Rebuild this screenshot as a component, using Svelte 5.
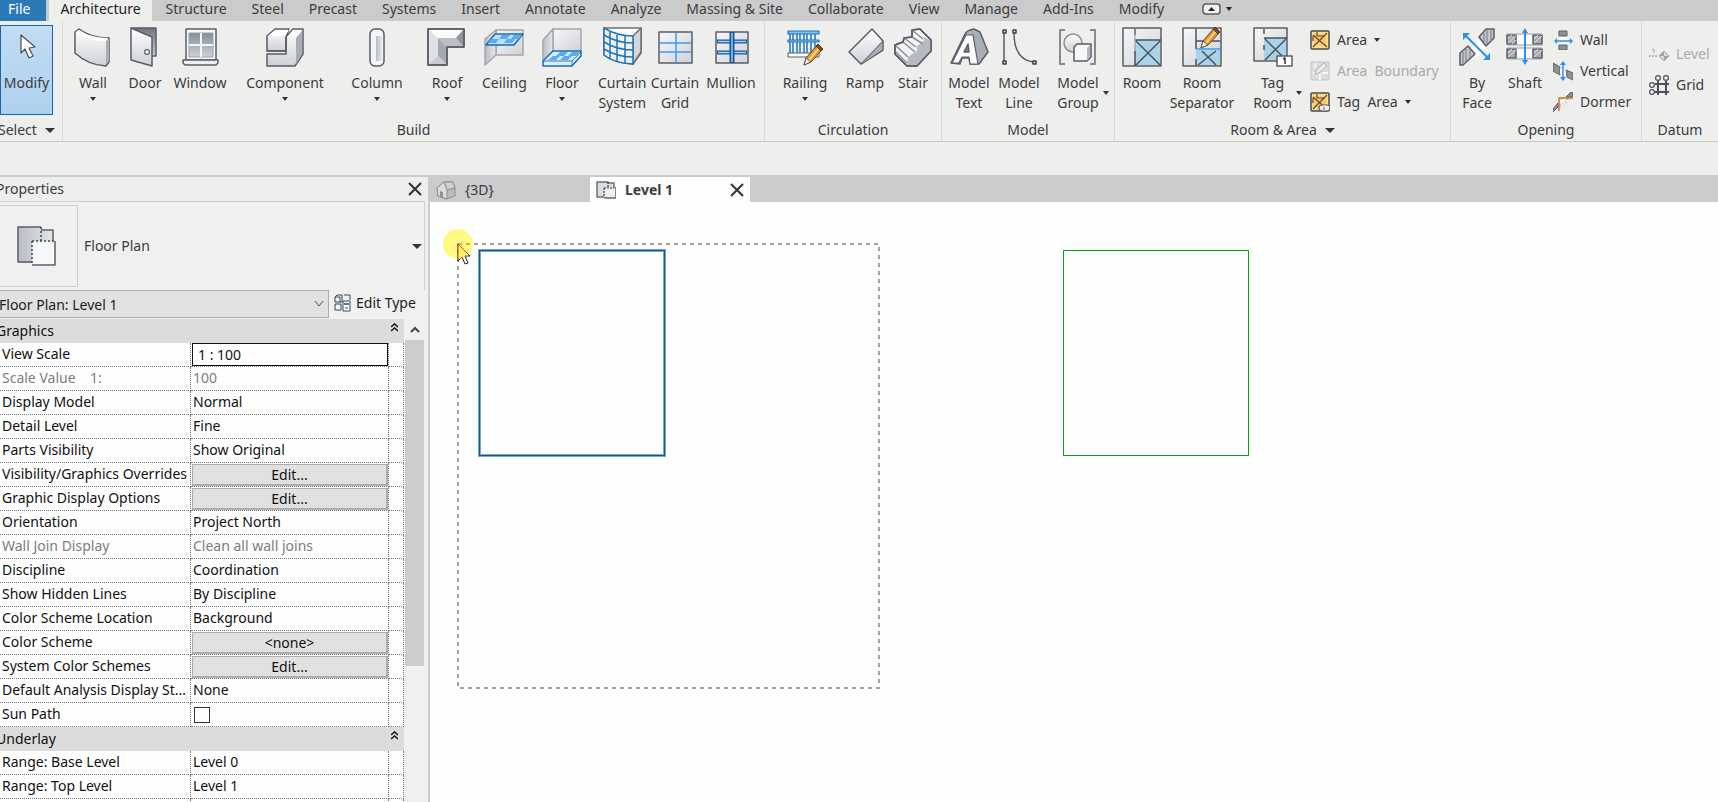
<script>
	const menus = [
		'Architecture', 'Structure', 'Steel', 'Precast', 'Systems', 'Insert', 'Annotate', 'Analyze',
		'Massing & Site', 'Collaborate', 'View', 'Manage', 'Add-Ins', 'Modify'
	];

	const panels = [
		{
			id: 'build',
			title: 'Build',
			tools: [
				{ icon: 'wall', lines: ['Wall'], caret: 'below' },
				{ icon: 'door', lines: ['Door'] },
				{ icon: 'window', lines: ['Window'] },
				{ icon: 'component', lines: ['Component'], caret: 'below' },
				{ icon: 'column', lines: ['Column'], caret: 'below' },
				{ icon: 'roof', lines: ['Roof'], caret: 'below' },
				{ icon: 'ceiling', lines: ['Ceiling'] },
				{ icon: 'floor', lines: ['Floor'], caret: 'below' },
				{ icon: 'curtain-system', lines: ['Curtain', 'System'] },
				{ icon: 'curtain-grid', lines: ['Curtain', 'Grid'] },
				{ icon: 'mullion', lines: ['Mullion'] }
			]
		},
		{
			id: 'circulation',
			title: 'Circulation',
			tools: [
				{ icon: 'railing', lines: ['Railing'], caret: 'below' },
				{ icon: 'ramp', lines: ['Ramp'] },
				{ icon: 'stair', lines: ['Stair'] }
			]
		},
		{
			id: 'model',
			title: 'Model',
			tools: [
				{ icon: 'model-text', lines: ['Model', 'Text'] },
				{ icon: 'model-line', lines: ['Model', 'Line'] },
				{ icon: 'model-group', lines: ['Model', 'Group'], caret: 'side' }
			]
		},
		{
			id: 'room',
			title: 'Room & Area',
			more: true,
			tools: [
				{ icon: 'room', lines: ['Room'] },
				{ icon: 'room-separator', lines: ['Room', 'Separator'] },
				{ icon: 'tag-room', lines: ['Tag', 'Room'], caret: 'side' }
			],
			small: [
				{ icon: 'area', label: 'Area', caret: true },
				{ icon: 'area-boundary', label: 'Area  Boundary', disabled: true },
				{ icon: 'tag-area', label: 'Tag  Area', caret: true }
			]
		},
		{
			id: 'opening',
			title: 'Opening',
			tools: [
				{ icon: 'by-face', lines: ['By', 'Face'] },
				{ icon: 'shaft', lines: ['Shaft'] }
			],
			small: [
				{ icon: 'wall-opening', label: 'Wall' },
				{ icon: 'vertical', label: 'Vertical' },
				{ icon: 'dormer', label: 'Dormer' }
			]
		},
		{
			id: 'datum',
			title: 'Datum',
			tools: [],
			small: [
				{ icon: 'level', label: 'Level', disabled: true },
				{ icon: 'grid', label: 'Grid' }
			]
		}
	];

	const groups = [
		{
			title: 'Graphics',
			rows: [
				{ name: 'View Scale', value: '1 : 100', kind: 'input' },
				{ name: 'Scale Value    1:', value: '100', disabled: true },
				{ name: 'Display Model', value: 'Normal' },
				{ name: 'Detail Level', value: 'Fine' },
				{ name: 'Parts Visibility', value: 'Show Original' },
				{ name: 'Visibility/Graphics Overrides', value: 'Edit...', kind: 'button' },
				{ name: 'Graphic Display Options', value: 'Edit...', kind: 'button' },
				{ name: 'Orientation', value: 'Project North' },
				{ name: 'Wall Join Display', value: 'Clean all wall joins', disabled: true },
				{ name: 'Discipline', value: 'Coordination' },
				{ name: 'Show Hidden Lines', value: 'By Discipline' },
				{ name: 'Color Scheme Location', value: 'Background' },
				{ name: 'Color Scheme', value: '<none>', kind: 'button' },
				{ name: 'System Color Schemes', value: 'Edit...', kind: 'button' },
				{ name: 'Default Analysis Display St...', value: 'None' },
				{ name: 'Sun Path', kind: 'check' }
			]
		},
		{
			title: 'Underlay',
			rows: [
				{ name: 'Range: Base Level', value: 'Level 0' },
				{ name: 'Range: Top Level', value: 'Level 1' },
				{ name: '', value: '' }
			]
		}
	];

	let activeMenu = $state('Architecture');
	let collapsed = $state({});
</script>

{#snippet caret(big)}
	{#if big}
		<svg class="caret" width="10" height="5"><path d="M0 0h10L5 5z" /></svg>
	{:else}
		<svg class="caret" width="6" height="4"><path d="M0 0h6L3 4z" /></svg>
	{/if}
{/snippet}

{#snippet pencil()}
	<path d="M19 38l2-7 12-14 5 5-12 13z" fill="#e8922a" stroke="#5a4a3a" stroke-width="1" />
	<path d="M24 33l10-12" stroke="#ffd27a" stroke-width="2" />
	<path d="M19 38l2-7 5 4z" fill="#f6efe2" stroke="#55585e" stroke-width="1" />
	<path d="M31 19l2-2 5 5-2 2z" fill="#8a4a1c" stroke="#4a3a30" stroke-width="1" />
{/snippet}

{#snippet bigIcon(name)}
	<svg class="icon" width="40" height="40" viewBox="0 0 40 40" fill="none" stroke="#595e66" stroke-width="1.5" stroke-linejoin="round">
		{#if name === 'modify'}
			<path d="M14 8v18l4-4 4 9 4-2-4-8 6-1z" fill="#fff" stroke="#4a5058" stroke-width="1.2" />
		{:else if name === 'wall'}
			<path d="M2 5l4-3q12 9 30 9v24l-3 4Q15 38 2 26z" fill="url(#metal)" />
			<path d="M3 5q14 10 29 9l3-3Q18 11 6 3z" fill="#fff" stroke="none" />
			<path d="M33 14v23l3-3V12z" fill="#a9adb4" stroke="none" />
		{:else if name === 'door'}
			<path d="M6 1h25v28h-5" fill="url(#dark)" />
			<path d="M6 1l21 9v29L6 33z" fill="url(#metal)" />
			<circle cx="22" cy="25" r="2.4" fill="#fff" stroke-width="1.2" />
		{:else if name === 'window'}
			<path d="M6 2h30v31H6z" fill="#f6f7f8" />
			<path d="M9 6h24v24H9z" fill="url(#glass)" stroke="#9aa0a8" stroke-width="1" />
			<path d="M21 6v24M9 18h24" stroke="#f4f5f6" stroke-width="2" />
			<path d="M3 33h35v3l-2 2H5l-2-2z" fill="#eceef0" />
		{:else if name === 'component'}
			<path d="M2 27h19V10l7-8h10v25l-8 12H2z" fill="url(#metal)" />
			<path d="M2 24V9l8-7h14l-3 8v14z" fill="url(#metal)" />
			<path d="M3 9h17l4-6H10z" fill="#fff" stroke="none" />
			<path d="M31 11v26l6-10V4z" fill="#a9aeb6" stroke="none" />
			<path d="M22 10h9l6-7h-9z" fill="#fbfbfc" stroke="none" />
			<path d="M2 24h19V10" />
		{:else if name === 'column'}
			<rect x="13" y="2" width="14" height="37" rx="5" fill="#f3f4f5" />
			<path d="M19 9h6v25h-6z" fill="url(#side)" stroke="none" />
		{:else if name === 'roof'}
			<path d="M1 2h36v18H20v18H1z" fill="#e9eaec" />
			<path d="M2 3h34l-7 8H11z" fill="#fbfbfc" stroke="none" />
			<path d="M11 11h18l7 8H19z" fill="#bcc0c6" stroke="none" />
			<path d="M36 3v16l-7-8z" fill="#8f959e" stroke="none" />
			<path d="M2 3l9 8v18l-9 8z" fill="#dfe1e4" stroke="none" />
			<path d="M11 11l8 8v18l-8-8z" fill="#a4a9b1" stroke="none" />
			<path d="M2 37l9-8 8 8z" fill="#c9ccd1" stroke="none" />
			<path d="M1 2h36v18H20v18H1z" />
		{:else if name === 'ceiling'}
			<path d="M12 3h27v25H12z" fill="url(#pale)" stroke="#a4a6aa" />
			<path d="M1 12l11-9v25L1 38z" fill="url(#side)" stroke="#a4a6aa" />
			<path d="M11 7h28l-9 11H2z" fill="#bfe0fb" stroke="#1d6ab0" />
			<path d="M18 8l-3 4h8l3-4zM30 8l-3 4h8l3-4zM7 12l-3 4h8l3-4zM23 12l-3 4h8l3-4z" fill="#5aaced" stroke="none" />
		{:else if name === 'floor'}
			<path d="M11 2h28v23H11z" fill="url(#pale)" stroke="#a4a6aa" />
			<path d="M1 13L11 2v23L1 34z" fill="url(#side)" stroke="#a4a6aa" />
			<path d="M1 34l10-10h28v5l-9 10H1z" fill="#d9eefc" stroke="#1d6ab0" />
			<path d="M18 25l-4 4h8l4-4zM30 25l-4 4h8l4-4zM11 29l-5 4h8l4-4zM22 29l-4 4h8l4-4z" fill="#5aaced" stroke="none" />
			<path d="M1 34h29l9-9M30 34v5" stroke="#2a7cc4" stroke-width="1" />
		{:else if name === 'curtain-system'}
			<path d="M2 1h37v25L31 37Q12 36 2 28z" fill="url(#metal)" stroke="#6b6f76" />
			<path d="M31 9l8-8v24l-8 12z" fill="#d4d6da" stroke="#6b6f76" />
			<path d="M2 1q13 8 29 8v28Q12 36 2 28z" fill="#eef1f4" stroke="#2273b6" />
			<path d="M2 8q13 8 29 8M2 15q13 8 29 8M2 22q13 8 29 8M8 5v27M15 8v27M23 9v28" stroke="#2273b6" />
		{:else if name === 'curtain-grid'}
			<rect x="4" y="5" width="33" height="31" fill="url(#pale)" />
			<path d="M21 6v29M5 16h31M5 25h31" stroke="#3b9df2" />
		{:else if name === 'mullion'}
			<rect x="5" y="5" width="32" height="31" fill="url(#pale)" />
			<path d="M6 14.500h30M6 25.500h30" stroke="#16569a" stroke-width="4" />
			<path d="M7 14.500h28M7 25.500h28" stroke="#a4d4fa" stroke-width="1.500" />
			<path d="M21 5v31" stroke="#16569a" stroke-width="5" />
			<path d="M21 6v29" stroke="#6cb0e6" stroke-width="2" />
		{:else if name === 'railing'}
			<path d="M3 26h31v4H3z" fill="#fff" stroke-width="1" />
			<path d="M5 7v19M8 7v19M12 7v19M15 7v19M19 7v19M22 7v19M26 7v19M30 7v19" stroke="#2c7dbd" stroke-width="1.6" />
			<path d="M3 4h31v3H3zM3 13h31v2H3z" fill="#7cc0f3" stroke="#2273b6" stroke-width="1.2" />
			{@render pencil()}
		{:else if name === 'ramp'}
			<path d="M4 25L27 2l11 12v9L16 37z" fill="url(#metal)" />
			<path d="M16 37l21-23v9z" fill="#a8adb5" stroke="none" />
			<path d="M16 37l22-23" stroke-width="1" />
		{:else if name === 'stair'}
			<path d="M2 18l8-3 1-4 8-1V3l8-1 11 11v11L24 39H14L2 27z" fill="#f1f2f4" />
			<path d="M15 30l9-6v-5l7-5v-4l7 4v10L24 38H14z" fill="#b6bac1" stroke="none" />
			<path d="M2 18l13 12M10 15l12 10M11 11l12 9M19 10l11 7M19 3l11 9M2 24l12 12" stroke="#8a8f97" />
			<path d="M2 18l8-3 1-4 8-1V3l8-1 11 11v11L24 39H14L2 27z" />
		{:else if name === 'model-text'}
			<path d="M2 36L16 7q2-4 9-5l6 3 8 20-9 12h-9l-1-6h-7l-2 6z" fill="#a9aeb6" />
			<path d="M3 36L17 8h7l5 29h-8l-1-7h-7l-3 6z" fill="#fcfcfd" stroke-width="1.2" />
			<path d="M15 25l4-8 1 8z" fill="#7b818a" />
		{:else if name === 'model-line'}
			<path d="M5 6v28M15 6q0 26 19 29" />
			<path d="M4 3h3v3H4zM4 34h3v3H4zM14 3h3v3h-3zM34 34h3v3h-3z" fill="#eee" stroke="#3d4148" />
		{:else if name === 'model-group'}
			<path d="M7 3H2v34h5M32 3h5v34h-5" stroke="#868b92" stroke-width="2" />
			<circle cx="15" cy="16" r="9" fill="url(#metal)" stroke="#8b9097" />
			<path d="M16 20l3-3h14v13l-4 4H16z" fill="#f6f7f8" />
			<path d="M29 21v12l3-3V18z" fill="#b3b8bf" stroke="none" />
		{:else if name === 'room'}
			<rect x="1" y="1" width="38" height="38" fill="url(#pale)" />
			<path d="M13 13h25v25H13z" fill="#aad3ea" stroke="none" />
			<path d="M13 2v6M13 24v15M13 13h26M14 14l24 24M38 14L14 38" stroke="#4a545e" />
			<path d="M13 2v22" stroke="#8f959c" stroke-width="1" />
		{:else if name === 'room-separator'}
			<rect x="1" y="1" width="38" height="38" fill="url(#pale)" />
			<path d="M14 23h24v15H14z" fill="#aad3ea" stroke="none" />
			<path d="M14 2v20M14 32v7M14 14h24M20 24l14 14M34 24L16 38" stroke="#4a545e" />
			<path d="M14 22h24" stroke="#3b9df2" />
			<g transform="translate(0 -17)">{@render pencil()}</g>
		{:else if name === 'tag-room'}
			<rect x="1" y="1" width="33" height="33" fill="url(#pale)" />
			<path d="M11 11h22v22H11z" fill="#aad3ea" stroke="none" />
			<path d="M11 2v5M11 18v5M11 11h23M12 12l21 21M33 12L12 33" stroke="#4a545e" />
			<rect x="24" y="29" width="15" height="10" fill="#fff" />
			<path d="M30 32l2-1v6" stroke="#30343a" />
		{:else if name === 'by-face'}
			<path d="M13 22l9-9 8 6-11 12z" fill="#fff" stroke="none" />
			<path d="M3 26l8-7 7 8-12 11H3z" fill="#c3c6cb" />
			<path d="M22 10l7-8h8v9l-8 8z" fill="#c3c6cb" />
			<path d="M6 25v12M9 22v14M13 22v9M27 6v10M30 3v14M34 3v11" stroke="#777c84" stroke-width="1" />
			<path d="M8 8l23 23" stroke="#2f8fea" stroke-width="2" />
			<path d="M6 6h7l-7 7zM33 33h-7l7-7z" fill="#2f8fea" stroke="none" />
		{:else if name === 'shaft'}
			<path d="M11 8h17v9H11zM11 22h17v9H11z" fill="#fff" stroke="none" />
			<path d="M2 8h9v9H2zM28 8h9v9h-9zM2 22h9v9H2zM28 22h9v9h-9z" fill="#a9adb3" />
			<path d="M3 16l8-7M3 12l4-4M7 17l4-4M29 16l8-7M29 12l4-4M3 30l8-7M3 26l4-4M29 30l8-7M29 26l4-4" stroke="#e0e2e5" stroke-width="1" />
			<path d="M2 7h35M2 18h35M2 21h35M2 32h35" stroke="#9da1a7" stroke-width="1" />
			<path d="M20 4v31" stroke="#2f8fea" stroke-width="2" />
			<path d="M20 1l3 5h-6zM20 38l3-5h-6z" fill="#2f8fea" stroke="none" />
		{:else if name === 'plan'}
			<path d="M1 1h23v4h12v11h2v23H15v-2H1z" fill="url(#side)" stroke="none" />
			<path d="M15 15h23v24H15z" fill="#f6f7f8" stroke="none" />
			<path d="M24 1H1v35h14M24 4h12v11M38 15v24H15" />
			<path d="M24 1v14M15 15h23M15 15v24" stroke="#40454c" stroke-dasharray="2 2" />
		{/if}
	</svg>
{/snippet}

{#snippet smallIcon(name)}
	<svg class="icon" width="20" height="20" viewBox="0 0 20 20" fill="none" stroke="#5a5e66" stroke-linejoin="round">
		{#if name === 'area' || name === 'tag-area'}
			<rect x="1" y="1" width="18" height="18" rx="1" fill="#ffd98c" stroke="#4f4b48" stroke-width="1.5" />
			<path d="M4 4h12v11H4z" fill="#ffc668" stroke="none" />
			<path d="M3 17L17 3M3 5l14 12M7 2v4h8M3 11V6" stroke="#5b4a38" stroke-width="1.2" />
			{#if name === 'tag-area'}
				<rect x="9" y="13" width="11" height="6" rx="3" fill="#eceded" stroke-width="1.2" />
				<path d="M14 15v3" />
			{/if}
		{:else if name === 'area-boundary'}
			<rect x="1" y="1" width="18" height="18" fill="#dcdddd" stroke="#c3c4c5" />
			<path d="M3 12h6M12 12h6M10 13v6M5 2v5" stroke="#f6f6f6" stroke-width="2" />
			<path d="M5 13l1-4 8-7 3 3-8 7z" fill="#e9e9e9" stroke="#b1b2b4" />
		{:else if name === 'wall-opening'}
			<path d="M6 1h8v5H6zM6 15h8v5H6z" fill="#8d9198" />
			<path d="M6 7h8v7H6z" fill="#fff" stroke="none" />
			<path d="M3 11h14" stroke="#2f8fea" stroke-width="1.5" />
			<path d="M1 11l3-3v6zM20 11l-3-3v6z" fill="#2f8fea" stroke="none" />
		{:else if name === 'vertical'}
			<path d="M0 2l7 4v8l-7-4zM13 9l7 3v7l-6-3z" fill="#8d9198" />
			<path d="M7 7l6 3v6l-6-3z" fill="#fff" stroke="none" />
			<path d="M10 3v15" stroke="#2f8fea" stroke-width="1.5" />
			<path d="M10 0l3 4H7zM10 20l3-4H7z" fill="#2f8fea" stroke="none" />
		{:else if name === 'dormer'}
			<path d="M0 20l5-5v-4l-5 6zM13 5h7V0h-2z" fill="#8d9198" />
			<path d="M7 17V7h10z" fill="#fff" stroke="#d0d2d5" />
			<path d="M7 14l8-7" stroke="#9a9ea5" stroke-dasharray="2 1" />
			<path d="M6 19V6h14" stroke="#c87a22" stroke-width="1.5" />
		{:else if name === 'level'}
			<path d="M0 12h9" stroke="#a5a6a8" stroke-width="1.5" stroke-dasharray="2 1" />
			<path d="M3 6l2-1v4" stroke="#a5a6a8" />
			<path d="M15 7l5 5-5 5-5-5z" fill="#d9d9d9" stroke="#a5a6a8" />
			<path d="M15 12V7l-5 5zM15 12v5l5-5z" fill="#a5a6a8" stroke="none" />
		{:else if name === 'grid'}
			<path d="M9 6v14M17 6v14M6 9h14M6 17h14" stroke="#4c5058" stroke-width="2" />
			<g fill="#f4f4f4" stroke="#4c5058" stroke-width="1.2">
				<circle cx="9" cy="3" r="2.4" /><circle cx="17" cy="3" r="2.4" />
				<circle cx="3" cy="10" r="2.4" /><circle cx="3" cy="17" r="2.4" />
			</g>
		{:else if name === 'house'}
			<path d="M1 8l7-6 9 0 2 6v8l-9 3-8-3z" fill="#b9bbbe" stroke="#8c8f93" />
			<path d="M1 8l7-6 3 7v10l-9-3z" fill="#dcdddf" stroke="#8c8f93" />
			<path d="M8 2h9l2 6-8 2z" fill="#cdcfd1" stroke="#8c8f93" />
			<path d="M4 17v-6l3 1v6z" fill="#8c8f93" stroke="none" />
		{:else if name === 'plan'}
			<path d="M1 2h11v1h6v5h2v10H9v-1H1z" fill="#dadde1" stroke="#6a6f77" stroke-width="1.5" />
			<path d="M8 8h11v9H8z" fill="#eef0f2" stroke="none" />
			<path d="M12 2v6M8 8h10M8 8v9" stroke="#40454c" stroke-width="1.2" stroke-dasharray="2 1" />
		{:else if name === 'edit-type'}
			<path d="M2 4l2-2h5v7H2zM11 2h6v5M2 11h6v6H2zM2 4h5v5" fill="#f4f4f4" stroke="#3f434a" />
			<rect x="10" y="8" width="7" height="10" fill="#fff" stroke="#3f434a" />
			<path d="M11 11h5" stroke="#2a7cc4" stroke-width="2" />
			<path d="M12 15h3" stroke="#3f434a" />
		{/if}
	</svg>
{/snippet}

{#snippet closeIcon()}
	<svg width="14" height="14" viewBox="0 0 14 14"><path d="M1 1l12 12M13 1L1 13" stroke="#333" stroke-width="2" /></svg>
{/snippet}

<svg class="defs" width="0" height="0" aria-hidden="true">
	<defs>
		<linearGradient id="metal" x1="0" y1="0" x2="0" y2="1">
			<stop offset="0" stop-color="#fff" /><stop offset="1" stop-color="#cdd0d5" />
		</linearGradient>
		<linearGradient id="pale" x1="0" y1="0" x2="1" y2="1">
			<stop offset="0" stop-color="#f7f7f8" /><stop offset="1" stop-color="#d0d2d6" />
		</linearGradient>
		<linearGradient id="side" x1="0" y1="0" x2="1" y2="0">
			<stop offset="0" stop-color="#b9bdc4" /><stop offset="1" stop-color="#e6e8ea" />
		</linearGradient>
		<linearGradient id="dark" x1="0" y1="0" x2="0" y2="1">
			<stop offset="0" stop-color="#6e7681" /><stop offset="1" stop-color="#c9ccd1" />
		</linearGradient>
		<linearGradient id="glass" x1="0" y1="0" x2="0" y2="1">
			<stop offset="0" stop-color="#848e99" /><stop offset="1" stop-color="#cfd2d6" />
		</linearGradient>
	</defs>
</svg>

<div class="app">
	<nav class="menu">
		<button class="menu-tab file">File</button>
		{#each menus as menu}
			<button class="menu-tab" class:active={menu === activeMenu} onclick={() => (activeMenu = menu)}>{menu}</button>
		{/each}
		<button class="minimize" aria-label="Minimize ribbon">
			<svg width="30" height="12" viewBox="0 0 30 12">
				<rect x="1" y="1" width="17" height="10" rx="3" fill="#f2f2f2" stroke="#5a5e66" stroke-width="1.5" />
				<path d="M6 8h7L9.500 4zM24 4h6l-3 4z" fill="#222" />
			</svg>
		</button>
	</nav>

	<div class="ribbon">
		<section class="panel select">
			<div class="panel-body">
				<button class="tool modify">
					{@render bigIcon('modify')}
					<span class="tool-label">Modify</span>
				</button>
			</div>
			<button class="panel-title">Select {@render caret(true)}</button>
		</section>
		{#each panels as panel}
			<section class="panel {panel.id}">
				<div class="panel-body">
					{#each panel.tools as tool}
						<button class="tool">
							{@render bigIcon(tool.icon)}
							<span class="tool-label">
								{#each tool.lines as line}<span>{line}</span>{/each}
							</span>
							{#if tool.caret}
								<span class="tool-caret {tool.caret}">{@render caret(false)}</span>
							{/if}
						</button>
					{/each}
					{#if panel.small}
						<div class="stack">
							{#each panel.small as tool}
								<button class="small-tool" disabled={tool.disabled}>
									{@render smallIcon(tool.icon)}
									<span>{tool.label}</span>
									{#if tool.caret}{@render caret(false)}{/if}
								</button>
							{/each}
						</div>
					{/if}
				</div>
				<div class="panel-title">{panel.title} {#if panel.more}{@render caret(true)}{/if}</div>
			</section>
		{/each}
	</div>

	<div class="options-bar"></div>

	<main class="workspace">
		<aside class="properties">
			<header class="prop-head">
				<h2>Properties</h2>
				<button aria-label="Close properties">{@render closeIcon()}</button>
			</header>
			<button class="type-box">
				<span class="thumb">{@render bigIcon('plan')}</span>
				<span class="type-name">Floor Plan</span>
				{@render caret(true)}
			</button>
			<div class="type-row">
				<div class="instance">
					<select aria-label="Instance">
						<option>Floor Plan: Level 1</option>
					</select>
					<svg width="10" height="6" viewBox="0 0 10 6"><path d="M1 0l4 5 4-5" fill="none" stroke="#555" /></svg>
				</div>
				<button class="edit-type">{@render smallIcon('edit-type')}Edit Type</button>
			</div>
			<div class="prop-body">
				<table>
					<colgroup><col class="c-name" /><col class="c-value" /><col /></colgroup>
					{#each groups as group, g}
						<tbody>
							<tr class="group">
								<th colspan="3">
									<button onclick={() => (collapsed[group.title] = !collapsed[group.title])}>
										{group.title}
										<svg width="7" height="9" viewBox="0 0 7 9"><path d="M0 4l3.500-3L7 4M0 8l3.500-3L7 8" fill="none" stroke="#111" stroke-width="1.400" /></svg>
									</button>
								</th>
							</tr>
							{#if !collapsed[group.title]}
								{#each group.rows as row, r}
									<tr class:disabled={row.disabled}>
										<td><label for="p{g}-{r}">{row.name}</label></td>
										<td>
											{#if row.kind === 'input'}
												<input id="p{g}-{r}" type="text" value={row.value} />
											{:else if row.kind === 'button'}
												<button id="p{g}-{r}" class="cell-button">{row.value}</button>
											{:else if row.kind === 'check'}
												<input id="p{g}-{r}" type="checkbox" />
											{:else}
												<output id="p{g}-{r}">{row.value}</output>
											{/if}
										</td>
										<td></td>
									</tr>
								{/each}
							{/if}
						</tbody>
					{/each}
				</table>
				<div class="scrollbar">
					<button aria-label="Scroll up">
						<svg width="10" height="7" viewBox="0 0 10 7"><path d="M1 6l4-4 4 4" fill="none" stroke="#444" stroke-width="2" /></svg>
					</button>
					<div class="thumb-bar"></div>
				</div>
			</div>
		</aside>

		<section class="views">
			<div class="view-tabs">
				<button class="view-tab">{@render smallIcon('house')}<span>&#123;3D&#125;</span></button>
				<button class="view-tab active">
					{@render smallIcon('plan')}<span>Level 1</span>
					{@render closeIcon()}
				</button>
			</div>
			<svg class="canvas" fill="none">
				<clipPath id="halo"><circle cx="28" cy="42" r="15" /></clipPath>
				<rect x="49.500" y="48.500" width="185" height="205" stroke="#7d9edb" stroke-width="3" />
				<rect x="49.500" y="48.500" width="185" height="205" stroke="#006a5c" />
				<rect x="633.500" y="48.500" width="185" height="205" stroke="#0fa00f" />
				<circle cx="28" cy="42" r="15" fill="#fffa80" />
				<rect x="28" y="42" width="421" height="444" stroke="#a3a3a3" stroke-width="2" stroke-dasharray="4 4" />
				<path d="M28 42v17l4-4 3 7 3-1-3-7h5z" fill="#fff" stroke="#222" />
				<g clip-path="url(#halo)">
					<path d="M28 42h16" stroke="#e0a860" stroke-width="2" stroke-dasharray="4 4" />
					<path d="M28 42v17l4-4 3 7 3-1-3-7h5z" fill="#ffee66" stroke="#b4521c" />
				</g>
			</svg>
		</section>
	</main>
</div>

<style>
	:global(body) {
		background: #fefefe;
	}

	.defs {
		display: block;
	}

	.app {
		display: flex;
		flex-direction: column;
		height: 100vh;
		overflow: hidden;
		font: 14px/20px 'Noto Sans', 'Open Sans', sans-serif;
		color: #3a3c40;
		background: #eeeeec;
	}

	button,
	input,
	select {
		font: inherit;
		color: inherit;
	}

	button {
		padding: 0;
		border: 0;
		background: none;
		white-space: nowrap;
	}

	svg {
		flex: none;
	}

	.caret path {
		fill: #32343c;
	}

	.menu {
		display: flex;
		gap: 3px;
		height: 21px;
		overflow: hidden;
		background: #cbcbcb;
	}

	.menu-tab {
		padding: 0 11px 4px;
		line-height: 17px;
	}

	.menu-tab.file {
		padding: 0 16px 4px 8px;
		color: #fff;
		background: #2a79b7;
	}

	.menu-tab.active {
		color: #1c1c1c;
		background: #eeeeec;
	}

	.minimize {
		display: flex;
		margin-left: 24px;
		padding-top: 3px;
	}

	.ribbon {
		display: flex;
		border-bottom: 1px solid #c9c9c7;
	}

	.panel {
		display: flex;
		flex-direction: column;
		flex: none;
		box-sizing: border-box;
		height: 119px;
		margin-top: 1px;
		border-right: 1px solid #d8d8d6;
	}

	.panel-body {
		display: grid;
		align-items: start;
		flex: 1;
		padding-top: 2px;
	}

	.panel-title {
		display: flex;
		align-items: center;
		justify-content: center;
		gap: 8px;
		height: 22px;
	}

	.select {
		width: 63px;
	}

	.select .panel-title {
		margin-left: -2px;
		justify-content: flex-start;
	}

	.build .panel-body {
		grid-template-columns: 50px 54px 56px 114px 70px 70px 44px 72px 46px 62px 50px;
		padding-left: 5px;
		padding-right: 8px;
	}

	.circulation .panel-body {
		grid-template-columns: 80px 40px 56px;
	}

	.model .panel-body {
		grid-template-columns: 54px 46px 72px;
	}

	.room .panel-body {
		grid-template-columns: 54px 66px 75px 140px;
	}

	.opening .panel-body {
		grid-template-columns: 52px 44px 94px;
	}

	.datum {
		flex: 1;
		border-right: 0;
	}

	.tool {
		display: grid;
		grid-template-columns: 1fr auto 1fr;
		grid-template-rows: 42px auto auto;
		align-content: start;
		row-gap: 6px;
		box-sizing: border-box;
		height: 90px;
		margin-top: 1px;
		min-width: 0;
	}

	.tool .icon {
		grid-area: 1 / 1 / 2 / 4;
		justify-self: center;
		margin-top: 2px;
	}

	.tool-label {
		display: flex;
		flex-direction: column;
		grid-area: 2 / 2;
	}

	.tool-caret {
		display: flex;
	}

	.tool-caret.below {
		grid-area: 3 / 1 / 4 / 4;
		justify-self: center;
		margin-top: -2px;
	}

	.tool-caret.side {
		grid-area: 2 / 3;
		align-self: center;
		margin-left: 4px;
	}

	.modify {
		width: 53px;
		background: linear-gradient(#c2dcf3, #afd0ee);
		box-shadow: inset 0 0 0 1px #1467b3;
	}

	.stack {
		display: flex;
		flex-direction: column;
	}

	.opening .stack {
		padding-left: 6px;
	}

	.datum .stack {
		padding: 14px 0 0 7px;
	}

	.small-tool {
		display: flex;
		align-items: center;
		gap: 7px;
		height: 31px;
		white-space: pre;
	}

	.small-tool:disabled {
		color: #a9aaac;
	}

	.options-bar {
		height: 33px;
		border-bottom: 2px solid #cbcbcb;
	}

	.workspace {
		display: flex;
		flex: 1;
		min-height: 0;
	}

	.properties {
		display: flex;
		flex-direction: column;
		flex: none;
		width: 428px;
		overflow: hidden;
		border-right: 2px solid #cbcbcb;
		background: #f0f0f0;
	}

	.prop-head {
		display: flex;
		align-items: center;
		justify-content: space-between;
		height: 24px;
		padding-right: 6px;
		background: #eeeeec;
	}

	.prop-head h2 {
		margin: 0 0 0 -4px;
		font: inherit;
	}

	.prop-head button {
		display: flex;
	}

	.type-box {
		display: flex;
		align-items: center;
		gap: 6px;
		height: 89px;
		margin-right: 3px;
		padding-right: 2px;
		border: solid #cccdd0;
		border-width: 1px 1px 0 0;
		text-align: left;
	}

	.thumb {
		display: flex;
		align-items: center;
		justify-content: center;
		box-sizing: border-box;
		width: 78px;
		height: 82px;
		padding-right: 4px;
		border: 1px solid #cccdd0;
		border-left: 0;
	}

	.type-name {
		flex: 1;
	}

	.type-row {
		display: flex;
		gap: 4px;
		height: 29px;
		color: #1c1c1c;
	}

	.instance {
		display: grid;
		align-items: center;
		width: 333px;
		height: 28px;
		margin-left: -4px;
	}

	.instance select {
		grid-area: 1 / 1;
		height: 28px;
		padding: 1px 2px 0;
		appearance: none;
		border: 1px solid #adadad;
		border-radius: 0;
		background: #e1e1e1;
	}

	.instance svg {
		grid-area: 1 / 1;
		justify-self: end;
		margin-right: 5px;
		pointer-events: none;
	}

	.edit-type {
		display: flex;
		align-items: center;
		gap: 3px;
		height: 26px;
	}

	.prop-body {
		display: flex;
		align-items: stretch;
		flex: 1;
		gap: 1px;
		min-height: 0;
		color: #111;
	}

	table {
		flex: none;
		align-self: flex-start;
		width: 404px;
		table-layout: fixed;
		border-spacing: 0;
		background: #fefefe;
	}

	.c-name {
		width: 191px;
	}

	.c-value {
		width: 198px;
	}

	th {
		padding: 0;
		font-weight: 400;
		background: #dcdcda;
	}

	th button {
		display: flex;
		justify-content: space-between;
		width: 100%;
		height: 24px;
		padding-right: 6px;
		line-height: 24px;
		text-indent: -4px;
	}

	th svg {
		margin-top: 4px;
	}

	td {
		box-sizing: border-box;
		height: 24px;
		padding: 0 0 0 2px;
		border: dotted #77797c;
		border-width: 0 1px 1px 0;
		white-space: pre;
		overflow: hidden;
	}

	td:nth-child(2) {
		padding: 0 0 0 1px;
	}

	td label,
	output {
		display: block;
		height: 23px;
		line-height: 22px;
	}

	output {
		padding-left: 1px;
	}

	.disabled {
		color: #7c7f7a;
	}

	input[type='text'] {
		display: block;
		box-sizing: border-box;
		width: 100%;
		height: 23px;
		padding: 0 5px;
		border: 1px solid #111;
		background: #fefefe;
	}

	input[type='checkbox'] {
		display: block;
		width: 16px;
		height: 16px;
		margin: 0 0 0 2px;
		appearance: none;
		box-sizing: border-box;
		border: 1px solid #333;
		background: #fefefe;
	}

	.cell-button {
		display: block;
		box-sizing: border-box;
		width: 100%;
		height: 22px;
		border: solid #adadad;
		border-width: 1px 2px 2px 1px;
		line-height: 19px;
		background: #e1e1e1;
	}

	.scrollbar {
		width: 19px;
	}

	.scrollbar button {
		display: flex;
		align-items: center;
		justify-content: center;
		width: 100%;
		height: 21px;
	}

	.thumb-bar {
		height: 326px;
		background: #cdcdcd;
	}

	.views {
		display: flex;
		flex-direction: column;
		flex: 1;
		min-width: 0;
		background: #fefefe;
	}

	.view-tabs {
		display: flex;
		height: 25px;
		background: #cbcbcb;
	}

	.view-tab {
		display: flex;
		align-items: center;
		gap: 9px;
		width: 160px;
		padding: 0 6px;
		text-align: left;
	}

	.view-tab span {
		flex: 1;
	}

	.view-tab.active {
		font-weight: 700;
		background: #fefefe;
	}

	.canvas {
		flex: 1;
		width: 100%;
	}
</style>
